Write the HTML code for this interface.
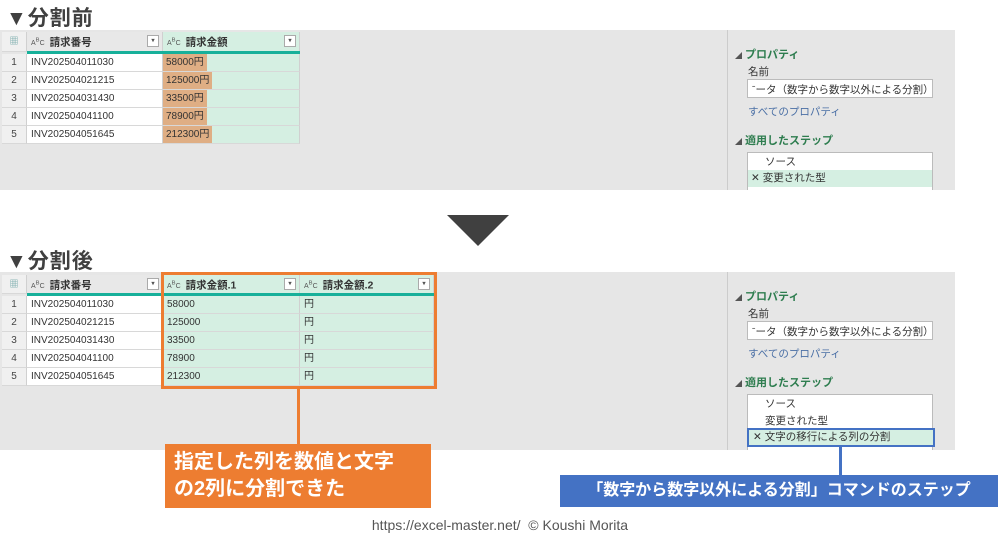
<!DOCTYPE html>
<html><head><meta charset="utf-8"><style>
*{margin:0;padding:0;box-sizing:border-box}
body{width:1000px;height:539px;background:#fff;position:relative;overflow:hidden;font-family:"Liberation Sans","Noto Sans CJK JP",sans-serif;color:#333}
.a{position:absolute}
.title{font-size:21px;font-weight:bold;color:#404040;letter-spacing:1px}
.panel{background:#e6e6e6}
.c{position:absolute;font-size:10px;line-height:18px;padding-left:4px;border-right:1px solid #d0d0d0;border-bottom:1px solid #d8d8d8;white-space:nowrap;overflow:hidden}
.hd{background:#e8e8e8;font-weight:bold;font-size:10.5px;color:#333}
.g{background:#d5efe2}
.w{background:#fff}
.n{background:#f0f0f0;text-align:center;padding:0;color:#444}
.dd{position:absolute;right:3px;top:3px;width:12px;height:12px;border:1px solid #aaa;background:#fff;font-size:6px;line-height:10px;text-align:center;color:#555}
.abc{font-size:7px;font-weight:normal;margin-right:5px;color:#555}
.pt{font-size:11px;font-weight:bold;color:#2e7d4f}
.pl{font-size:10.5px;color:#333}
</style></head><body>

<div class="a title" style="left:6px;top:2px">▼分割前</div>
<div class="a panel" style="left:0;top:30px;width:955px;height:160px"></div>
<div class="a" style="left:727px;top:30px;width:1px;height:160px;background:#ccc"></div>

<!-- top table -->
<div class="c hd n" style="left:2px;top:32px;width:25px;height:20px;color:#7aa;font-size:9px">▦</div>
<div class="c hd" style="left:27px;top:32px;width:136px;height:20px"><span class="abc">A<sup>B</sup>C</span>請求番号<span class="dd">▾</span></div>
<div class="c hd g" style="left:163px;top:32px;width:137px;height:20px"><span class="abc">A<sup>B</sup>C</span>請求金額<span class="dd">▾</span></div>
<div class="a" style="left:27px;top:51px;width:273px;height:3px;background:#17b09a"></div>

<div class="c n" style="left:2px;top:54px;width:25px;height:18px">1</div>
<div class="c w" style="left:27px;top:54px;width:136px;height:18px">INV202504011030</div>
<div class="c g" style="left:163px;top:54px;width:137px;height:18px;padding:0"><span style="background:#dfae84;padding:0 3px;display:inline-block;height:17px">58000円</span></div>
<div class="c n" style="left:2px;top:72px;width:25px;height:18px">2</div>
<div class="c w" style="left:27px;top:72px;width:136px;height:18px">INV202504021215</div>
<div class="c g" style="left:163px;top:72px;width:137px;height:18px;padding:0"><span style="background:#dfae84;padding:0 3px;display:inline-block;height:17px">125000円</span></div>
<div class="c n" style="left:2px;top:90px;width:25px;height:18px">3</div>
<div class="c w" style="left:27px;top:90px;width:136px;height:18px">INV202504031430</div>
<div class="c g" style="left:163px;top:90px;width:137px;height:18px;padding:0"><span style="background:#dfae84;padding:0 3px;display:inline-block;height:17px">33500円</span></div>
<div class="c n" style="left:2px;top:108px;width:25px;height:18px">4</div>
<div class="c w" style="left:27px;top:108px;width:136px;height:18px">INV202504041100</div>
<div class="c g" style="left:163px;top:108px;width:137px;height:18px;padding:0"><span style="background:#dfae84;padding:0 3px;display:inline-block;height:17px">78900円</span></div>
<div class="c n" style="left:2px;top:126px;width:25px;height:18px">5</div>
<div class="c w" style="left:27px;top:126px;width:136px;height:18px">INV202504051645</div>
<div class="c g" style="left:163px;top:126px;width:137px;height:18px;padding:0"><span style="background:#dfae84;padding:0 3px;display:inline-block;height:17px">212300円</span></div>

<!-- top right pane -->
<div class="a pt" style="left:735px;top:46px"><span style="font-size:7px;color:#555">◢</span> プロパティ</div>
<div class="a pl" style="left:748px;top:64px">名前</div>
<div class="a pl" style="left:747px;top:79px;width:186px;height:19px;background:#fff;border:1px solid #bbb;padding:2px 4px;white-space:nowrap;overflow:hidden">ˉータ（数字から数字以外による分割）</div>
<div class="a pl" style="left:748px;top:104px;color:#4a6fa5">すべてのプロパティ</div>
<div class="a pt" style="left:735px;top:132px"><span style="font-size:7px;color:#555">◢</span> 適用したステップ</div>
<div class="a" style="left:747px;top:152px;width:186px;height:38px;background:#fff;border:1px solid #bbb;border-bottom:none"></div>
<div class="a pl" style="left:765px;top:154px">ソース</div>
<div class="a pl" style="left:748px;top:170px;width:184px;height:17px;background:#d5efe2;padding-left:3px">✕ 変更された型</div>

<!-- arrow -->
<svg class="a" style="left:447px;top:215px" width="62" height="32"><polygon points="0,0 62,0 31,31" fill="#404040"/></svg>

<div class="a title" style="left:6px;top:245px">▼分割後</div>
<div class="a panel" style="left:0;top:272px;width:955px;height:178px"></div>
<div class="a" style="left:727px;top:272px;width:1px;height:178px;background:#ccc"></div>

<!-- bottom table -->
<div class="c hd n" style="left:2px;top:275px;width:25px;height:19px;color:#7aa;font-size:9px">▦</div>
<div class="c hd" style="left:27px;top:275px;width:136px;height:19px"><span class="abc">A<sup>B</sup>C</span>請求番号<span class="dd">▾</span></div>
<div class="c hd g" style="left:163px;top:275px;width:137px;height:19px"><span class="abc">A<sup>B</sup>C</span>請求金額.1<span class="dd">▾</span></div>
<div class="c hd g" style="left:300px;top:275px;width:134px;height:19px"><span class="abc">A<sup>B</sup>C</span>請求金額.2<span class="dd">▾</span></div>
<div class="a" style="left:27px;top:293px;width:407px;height:3px;background:#17b09a"></div>

<div class="c n" style="left:2px;top:296px;width:25px;height:18px">1</div>
<div class="c w" style="left:27px;top:296px;width:136px;height:18px">INV202504011030</div>
<div class="c g" style="left:163px;top:296px;width:137px;height:18px">58000</div>
<div class="c g" style="left:300px;top:296px;width:134px;height:18px">円</div>
<div class="c n" style="left:2px;top:314px;width:25px;height:18px">2</div>
<div class="c w" style="left:27px;top:314px;width:136px;height:18px">INV202504021215</div>
<div class="c g" style="left:163px;top:314px;width:137px;height:18px">125000</div>
<div class="c g" style="left:300px;top:314px;width:134px;height:18px">円</div>
<div class="c n" style="left:2px;top:332px;width:25px;height:18px">3</div>
<div class="c w" style="left:27px;top:332px;width:136px;height:18px">INV202504031430</div>
<div class="c g" style="left:163px;top:332px;width:137px;height:18px">33500</div>
<div class="c g" style="left:300px;top:332px;width:134px;height:18px">円</div>
<div class="c n" style="left:2px;top:350px;width:25px;height:18px">4</div>
<div class="c w" style="left:27px;top:350px;width:136px;height:18px">INV202504041100</div>
<div class="c g" style="left:163px;top:350px;width:137px;height:18px">78900</div>
<div class="c g" style="left:300px;top:350px;width:134px;height:18px">円</div>
<div class="c n" style="left:2px;top:368px;width:25px;height:18px">5</div>
<div class="c w" style="left:27px;top:368px;width:136px;height:18px">INV202504051645</div>
<div class="c g" style="left:163px;top:368px;width:137px;height:18px">212300</div>
<div class="c g" style="left:300px;top:368px;width:134px;height:18px">円</div>

<div class="a" style="left:161px;top:272px;width:276px;height:117px;border:3px solid #ed7d31"></div>
<div class="a" style="left:297px;top:388px;width:3px;height:57px;background:#ed7d31"></div>
<div class="a" style="left:165px;top:444px;width:266px;height:64px;background:#ed7d31;color:#fff;font-weight:bold;font-size:20px;line-height:27px;padding:5px 0 0 9px">指定した列を数値と文字<br>の2列に分割できた</div>

<!-- bottom right pane -->
<div class="a pt" style="left:735px;top:288px"><span style="font-size:7px;color:#555">◢</span> プロパティ</div>
<div class="a pl" style="left:748px;top:306px">名前</div>
<div class="a pl" style="left:747px;top:321px;width:186px;height:19px;background:#fff;border:1px solid #bbb;padding:2px 4px;white-space:nowrap;overflow:hidden">ˉータ（数字から数字以外による分割）</div>
<div class="a pl" style="left:748px;top:346px;color:#4a6fa5">すべてのプロパティ</div>
<div class="a pt" style="left:735px;top:374px"><span style="font-size:7px;color:#555">◢</span> 適用したステップ</div>
<div class="a" style="left:747px;top:394px;width:186px;height:56px;background:#fff;border:1px solid #bbb;border-bottom:none"></div>
<div class="a pl" style="left:765px;top:396px">ソース</div>
<div class="a pl" style="left:765px;top:413px">変更された型</div>
<div class="a pl" style="left:747px;top:428px;width:188px;height:19px;background:#d5efe2;border:2px solid #4472c4;padding-left:4px;line-height:14px">✕ 文字の移行による列の分割</div>
<div class="a" style="left:839px;top:447px;width:3px;height:29px;background:#4472c4"></div>
<div class="a" style="left:560px;top:475px;width:438px;height:32px;background:#4472c4;color:#fff;font-weight:bold;font-size:16px;line-height:32px;text-align:center;white-space:nowrap">「数字から数字以外による分割」コマンドのステップ</div>

<div class="a" style="left:0;top:517px;width:1000px;text-align:center;font-size:14px;color:#555">https://excel-master.net/ &nbsp;© Koushi Morita</div>
</body></html>
